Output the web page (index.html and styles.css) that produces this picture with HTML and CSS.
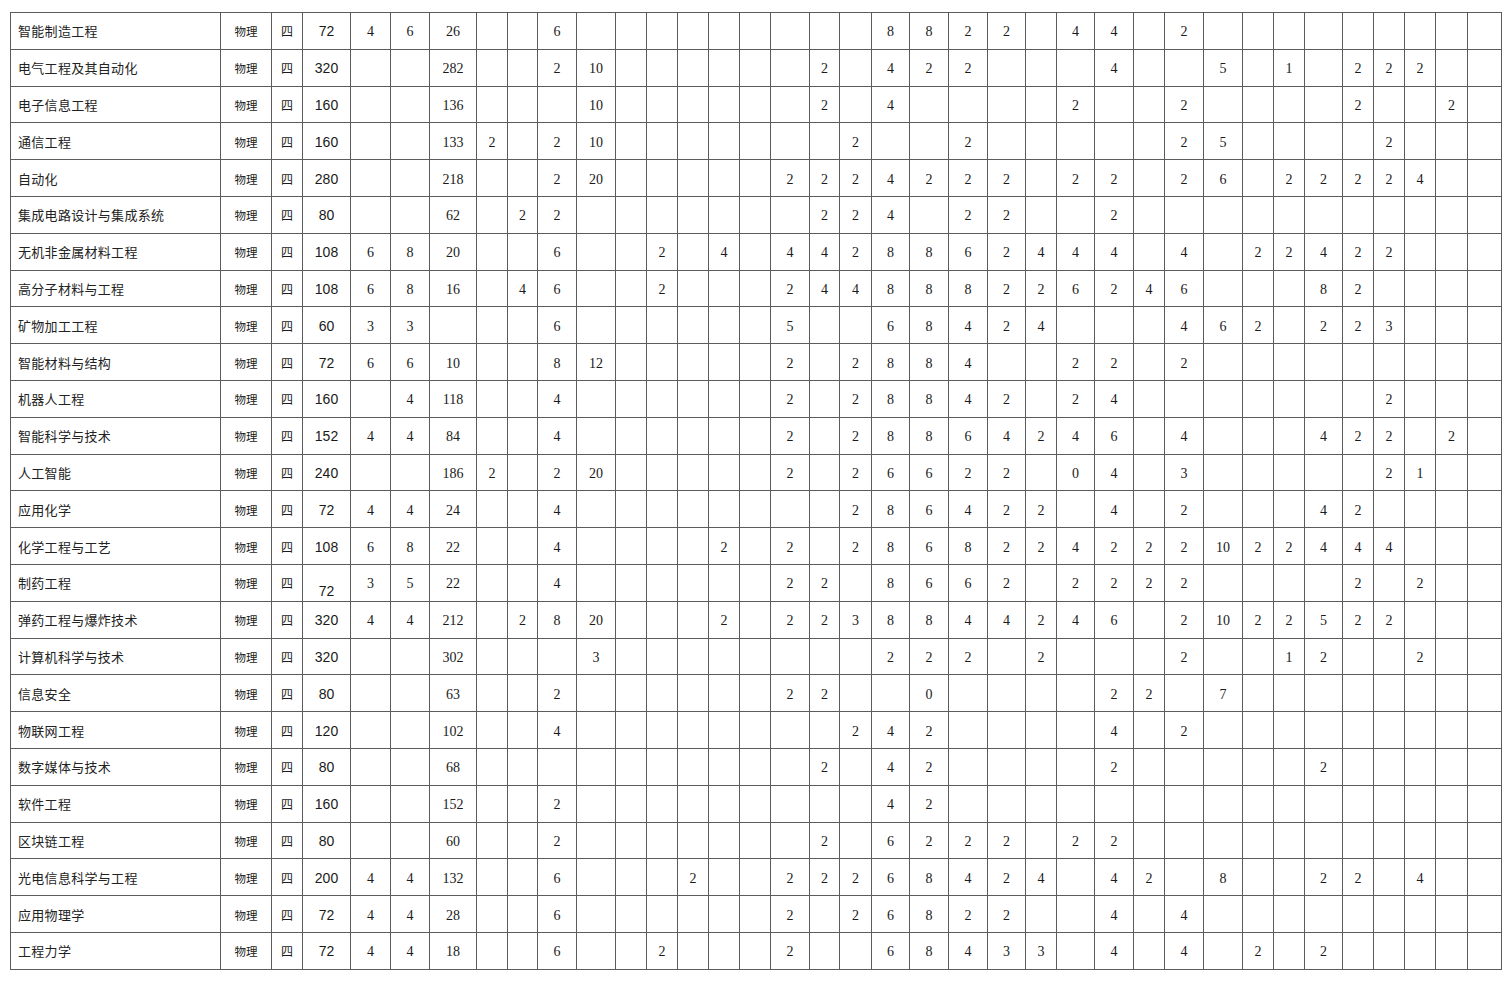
FILE: index.html
```html
<!DOCTYPE html>
<html lang="zh-CN">
<head>
<meta charset="utf-8">
<title>专业选科与学分表</title>
<link rel="stylesheet" href="styles.css">
</head>
<body>
<table class="grid" id="grid">
  <colgroup id="cols"></colgroup>
  <tbody id="rows"></tbody>
</table>
<script src="app.js"></script>
</body>
</html>
```

FILE: styles.css
```css
html, body {
  margin: 0;
  padding: 0;
  background: #ffffff;
}
body {
  padding: 12px 0 0 10px;
  font-family: "Liberation Serif", "Noto Sans CJK SC", serif;
  color: #1a1a1a;
}
.grid {
  border-collapse: collapse;
  table-layout: fixed;
  width: 1491px;
}
.grid tr {
  height: 36.8px;
}
.grid td {
  border: 1px solid #5c5c5c;
  padding: 3px 0 0 0;
  text-align: center;
  vertical-align: middle;
  font-family: "Liberation Serif", serif;
  font-size: 14px;
  line-height: 16px;
  white-space: nowrap;
  overflow: hidden;
}
.grid td.name {
  text-align: left;
  padding: 1px 0 0 7px;
  letter-spacing: 0.3px;
  font-family: "Noto Sans CJK SC", "Noto Sans", sans-serif;
  font-size: 13px;
  color: #222;
}
.grid td.subj {
  padding-top: 1px;
  font-family: "Noto Sans CJK SC", sans-serif;
  font-size: 11.5px;
}
.grid td.len {
  padding-top: 1px;
  font-family: "Noto Sans CJK SC", sans-serif;
  font-size: 12px;
}
.grid td.total {
  padding-top: 1px;
  font-family: "Liberation Sans", "Noto Sans", sans-serif;
  font-size: 14px;
}
.grid td.total.low {
  padding-top: 16px;
}
```

FILE: app.js
```js
var widths = [210, 51, 31, 48, 40, 39, 47, 31, 30, 39, 39, 31, 31, 31, 31, 31, 39, 30, 32, 38, 39, 39, 38, 31, 38, 39, 31, 39, 39, 31, 31, 38, 31, 31, 31, 32, 34];
var data = [
  ["智能制造工程", 72, {1:4,2:6,3:26,6:6,16:8,17:8,18:2,19:2,21:4,22:4,24:2}],
  ["电气工程及其自动化", 320, {3:282,6:2,7:10,14:2,16:4,17:2,18:2,22:4,25:5,27:1,29:2,30:2,31:2}],
  ["电子信息工程", 160, {3:136,7:10,14:2,16:4,21:2,24:2,29:2,32:2}],
  ["通信工程", 160, {3:133,4:2,6:2,7:10,15:2,18:2,24:2,25:5,30:2}],
  ["自动化", 280, {3:218,6:2,7:20,13:2,14:2,15:2,16:4,17:2,18:2,19:2,21:2,22:2,24:2,25:6,27:2,28:2,29:2,30:2,31:4}],
  ["集成电路设计与集成系统", 80, {3:62,5:2,6:2,14:2,15:2,16:4,18:2,19:2,22:2}],
  ["无机非金属材料工程", 108, {1:6,2:8,3:20,6:6,9:2,11:4,13:4,14:4,15:2,16:8,17:8,18:6,19:2,20:4,21:4,22:4,24:4,26:2,27:2,28:4,29:2,30:2}],
  ["高分子材料与工程", 108, {1:6,2:8,3:16,5:4,6:6,9:2,13:2,14:4,15:4,16:8,17:8,18:8,19:2,20:2,21:6,22:2,23:4,24:6,28:8,29:2}],
  ["矿物加工工程", 60, {1:3,2:3,6:6,13:5,16:6,17:8,18:4,19:2,20:4,24:4,25:6,26:2,28:2,29:2,30:3}],
  ["智能材料与结构", 72, {1:6,2:6,3:10,6:8,7:12,13:2,15:2,16:8,17:8,18:4,21:2,22:2,24:2}],
  ["机器人工程", 160, {2:4,3:118,6:4,13:2,15:2,16:8,17:8,18:4,19:2,21:2,22:4,30:2}],
  ["智能科学与技术", 152, {1:4,2:4,3:84,6:4,13:2,15:2,16:8,17:8,18:6,19:4,20:2,21:4,22:6,24:4,28:4,29:2,30:2,32:2}],
  ["人工智能", 240, {3:186,4:2,6:2,7:20,13:2,15:2,16:6,17:6,18:2,19:2,21:0,22:4,24:3,30:2,31:1}],
  ["应用化学", 72, {1:4,2:4,3:24,6:4,15:2,16:8,17:6,18:4,19:2,20:2,22:4,24:2,28:4,29:2}],
  ["化学工程与工艺", 108, {1:6,2:8,3:22,6:4,11:2,13:2,15:2,16:8,17:6,18:8,19:2,20:2,21:4,22:2,23:2,24:2,25:10,26:2,27:2,28:4,29:4,30:4}],
  ["制药工程", 72, {1:3,2:5,3:22,6:4,13:2,14:2,16:8,17:6,18:6,19:2,21:2,22:2,23:2,24:2,29:2,31:2}, true],
  ["弹药工程与爆炸技术", 320, {1:4,2:4,3:212,5:2,6:8,7:20,11:2,13:2,14:2,15:3,16:8,17:8,18:4,19:4,20:2,21:4,22:6,24:2,25:10,26:2,27:2,28:5,29:2,30:2}],
  ["计算机科学与技术", 320, {3:302,7:3,16:2,17:2,18:2,20:2,24:2,27:1,28:2,31:2}],
  ["信息安全", 80, {3:63,6:2,13:2,14:2,17:0,22:2,23:2,25:7}],
  ["物联网工程", 120, {3:102,6:4,15:2,16:4,17:2,22:4,24:2}],
  ["数字媒体与技术", 80, {3:68,14:2,16:4,17:2,22:2,28:2}],
  ["软件工程", 160, {3:152,6:2,16:4,17:2}],
  ["区块链工程", 80, {3:60,6:2,14:2,16:6,17:2,18:2,19:2,21:2,22:2}],
  ["光电信息科学与工程", 200, {1:4,2:4,3:132,6:6,10:2,13:2,14:2,15:2,16:6,17:8,18:4,19:2,20:4,22:4,23:2,25:8,28:2,29:2,31:4}],
  ["应用物理学", 72, {1:4,2:4,3:28,6:6,13:2,15:2,16:6,17:8,18:2,19:2,22:4,24:4}],
  ["工程力学", 72, {1:4,2:4,3:18,6:6,9:2,13:2,16:6,17:8,18:4,19:3,20:3,22:4,24:4,26:2,28:2}]
];

var cols = document.getElementById("cols");
widths.forEach(function (w) {
  var c = document.createElement("col");
  c.style.width = w + "px";
  cols.appendChild(c);
});

var body = document.getElementById("rows");
data.forEach(function (r) {
  var tr = document.createElement("tr");
  function cell(cls, text) {
    var td = document.createElement("td");
    if (cls) td.className = cls;
    if (text !== undefined && text !== null) td.textContent = String(text);
    tr.appendChild(td);
  }
  cell("name", r[0]);
  cell("subj", "物理");
  cell("len", "四");
  cell(r[3] ? "total low" : "total", r[1]);
  for (var i = 1; i <= 33; i++) {
    cell("", r[2].hasOwnProperty(i) ? r[2][i] : null);
  }
  body.appendChild(tr);
});
```
